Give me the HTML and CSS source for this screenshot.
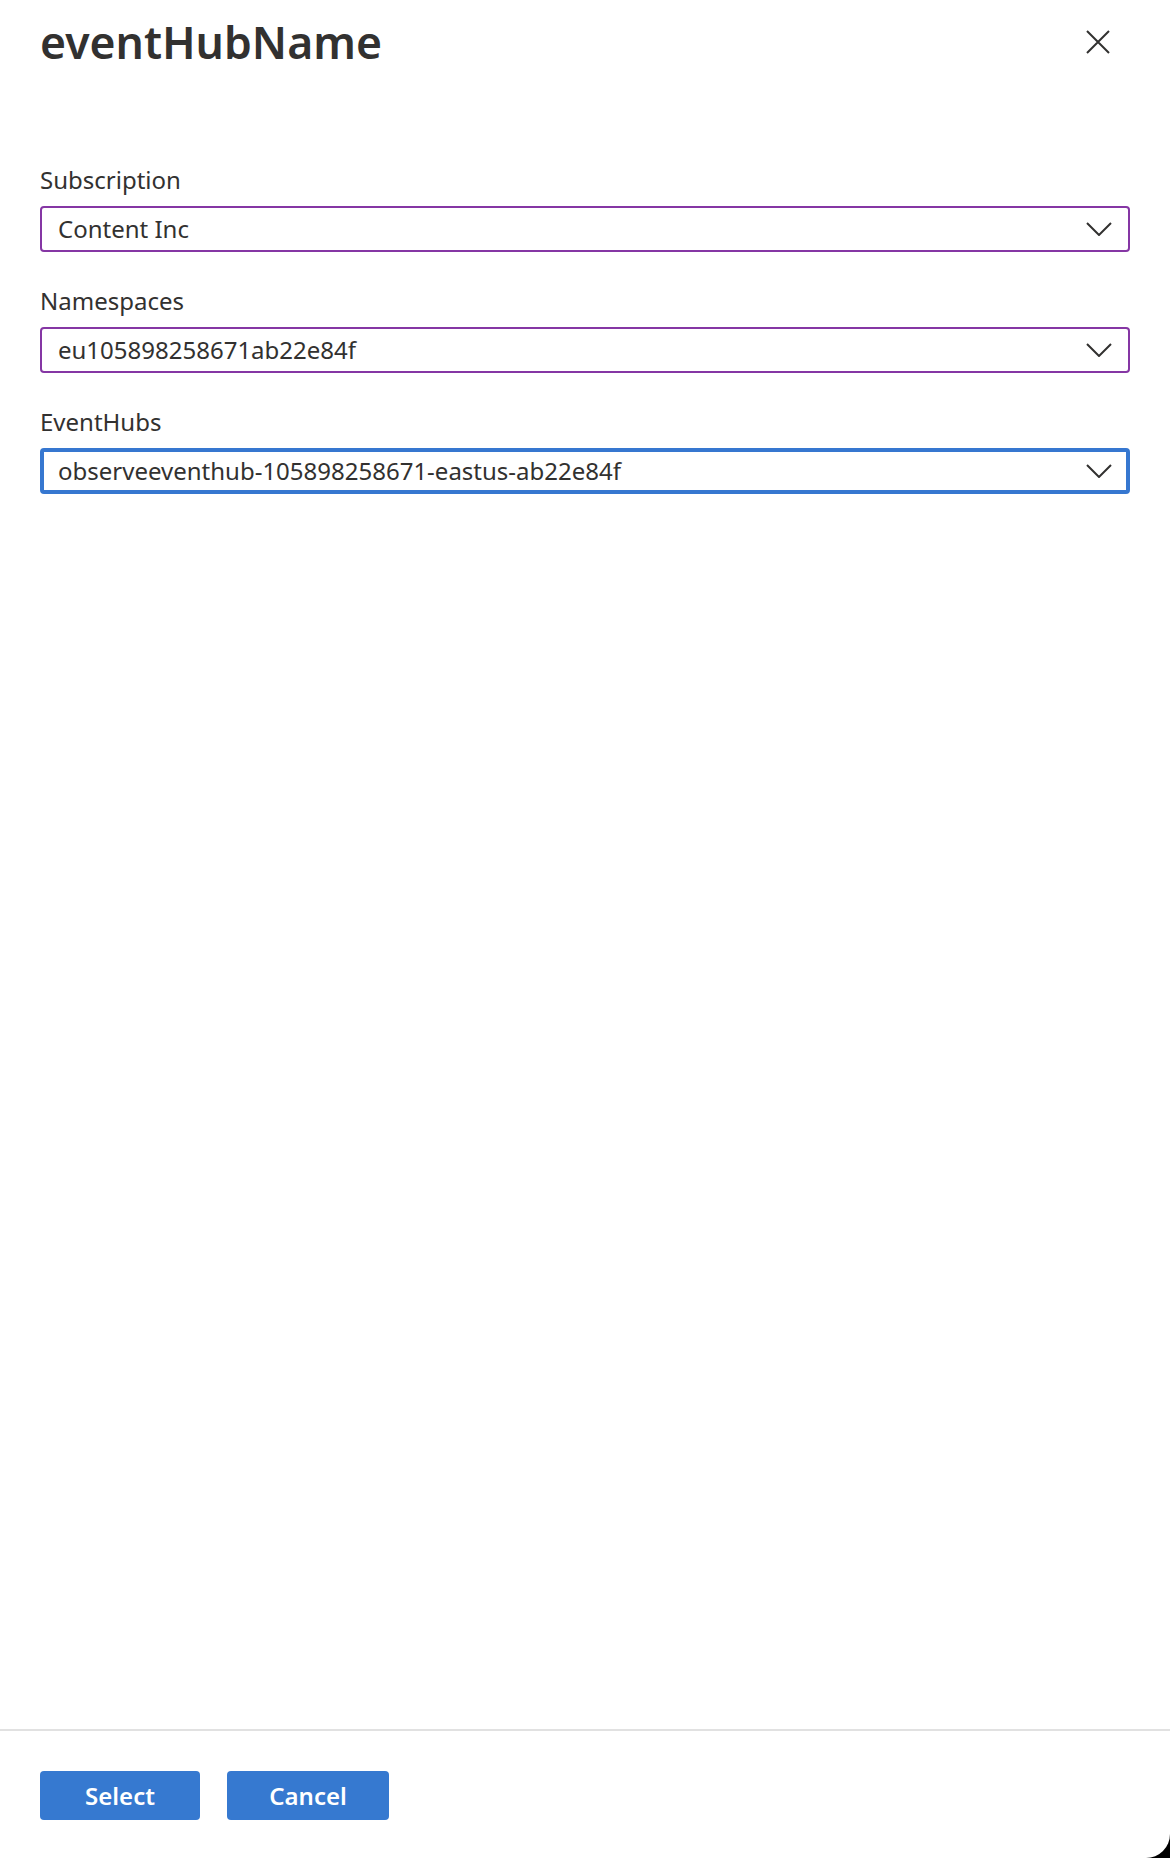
FILE: index.html
```html
<!DOCTYPE html>
<html lang="en">
<head>
<meta charset="utf-8">
<title>eventHubName</title>
<link rel="stylesheet" href="styles.css">
</head>
<body>
<div class="panel">
  <header class="header">
    <h1 class="title">eventHubName</h1>
    <button class="close" aria-label="Close">
      <svg width="24" height="24" viewBox="0 0 24 24"><path d="M1 1 L23 23 M23 1 L1 23" stroke="#323130" stroke-width="2" fill="none"/></svg>
    </button>
  </header>
  <main class="form">
    <div class="field">
      <div class="label">Subscription</div>
      <div class="select">
        <span class="value">Content Inc</span>
        <svg class="chev" width="26" height="14" viewBox="0 0 26 14"><polyline points="1,1 13,13 25,1" stroke="#323130" stroke-width="2" fill="none"/></svg>
      </div>
    </div>
    <div class="field">
      <div class="label">Namespaces</div>
      <div class="select">
        <span class="value">eu105898258671ab22e84f</span>
        <svg class="chev" width="26" height="14" viewBox="0 0 26 14"><polyline points="1,1 13,13 25,1" stroke="#323130" stroke-width="2" fill="none"/></svg>
      </div>
    </div>
    <div class="field">
      <div class="label">EventHubs</div>
      <div class="select focused">
        <span class="value">observeeventhub-105898258671-eastus-ab22e84f</span>
        <svg class="chev" width="26" height="14" viewBox="0 0 26 14"><polyline points="1,1 13,13 25,1" stroke="#323130" stroke-width="2" fill="none"/></svg>
      </div>
    </div>
  </main>
  <footer class="footer">
    <button class="btn btn-select">Select</button>
    <button class="btn btn-cancel">Cancel</button>
  </footer>
</div>
</body>
</html>
```
FILE: styles.css
```css
html, body {
  margin: 0;
  padding: 0;
  background: #000;
}
body {
  font-family: "Noto Sans", "Open Sans", sans-serif;
  color: #323130;
}
.panel {
  width: 1170px;
  height: 1858px;
  background: #fff;
  border-bottom-right-radius: 24px;
  display: flex;
  flex-direction: column;
  box-sizing: border-box;
}
.header {
  display: flex;
  justify-content: space-between;
  align-items: center;
  padding: 14px 60px 0 40px;
  height: 56px;
}
.title {
  margin: 0;
  font-size: 44.5px;
  font-weight: 600;
  line-height: 56px;
  color: #323130;
}
.close {
  border: none;
  background: none;
  padding: 0;
  margin: 0;
  width: 24px;
  height: 24px;
  display: flex;
}
.form {
  flex: 1;
  padding: 95px 40px 0 40px;
  display: flex;
  flex-direction: column;
  gap: 34px;
}
.field {
  display: flex;
  flex-direction: column;
  gap: 11px;
}
.label {
  font-size: 24px;
  line-height: 30px;
  color: #323130;
}
.select {
  height: 46px;
  box-sizing: border-box;
  border: 2px solid #8536a4;
  border-radius: 4px;
  display: flex;
  align-items: center;
  justify-content: space-between;
  padding: 0 16px 0 16px;
}
.select.focused {
  border: 4px solid #3677d0;
  padding: 0 14px 0 14px;
}
.value {
  font-size: 24px;
  line-height: 30px;
  color: #323130;
}
.chev {
  display: block;
}
.footer {
  border-top: 2px solid #e1e1e1;
  padding: 40px 40px 38px 40px;
  display: flex;
  gap: 27px;
}
.btn {
  height: 49px;
  border: none;
  border-radius: 4px;
  background: #3679d0;
  color: #fff;
  font-family: "Noto Sans", "Open Sans", sans-serif;
  font-size: 24px;
  font-weight: 600;
  padding: 0;
  margin: 0;
}
.btn-select {
  width: 160px;
}
.btn-cancel {
  width: 162px;
}
```
